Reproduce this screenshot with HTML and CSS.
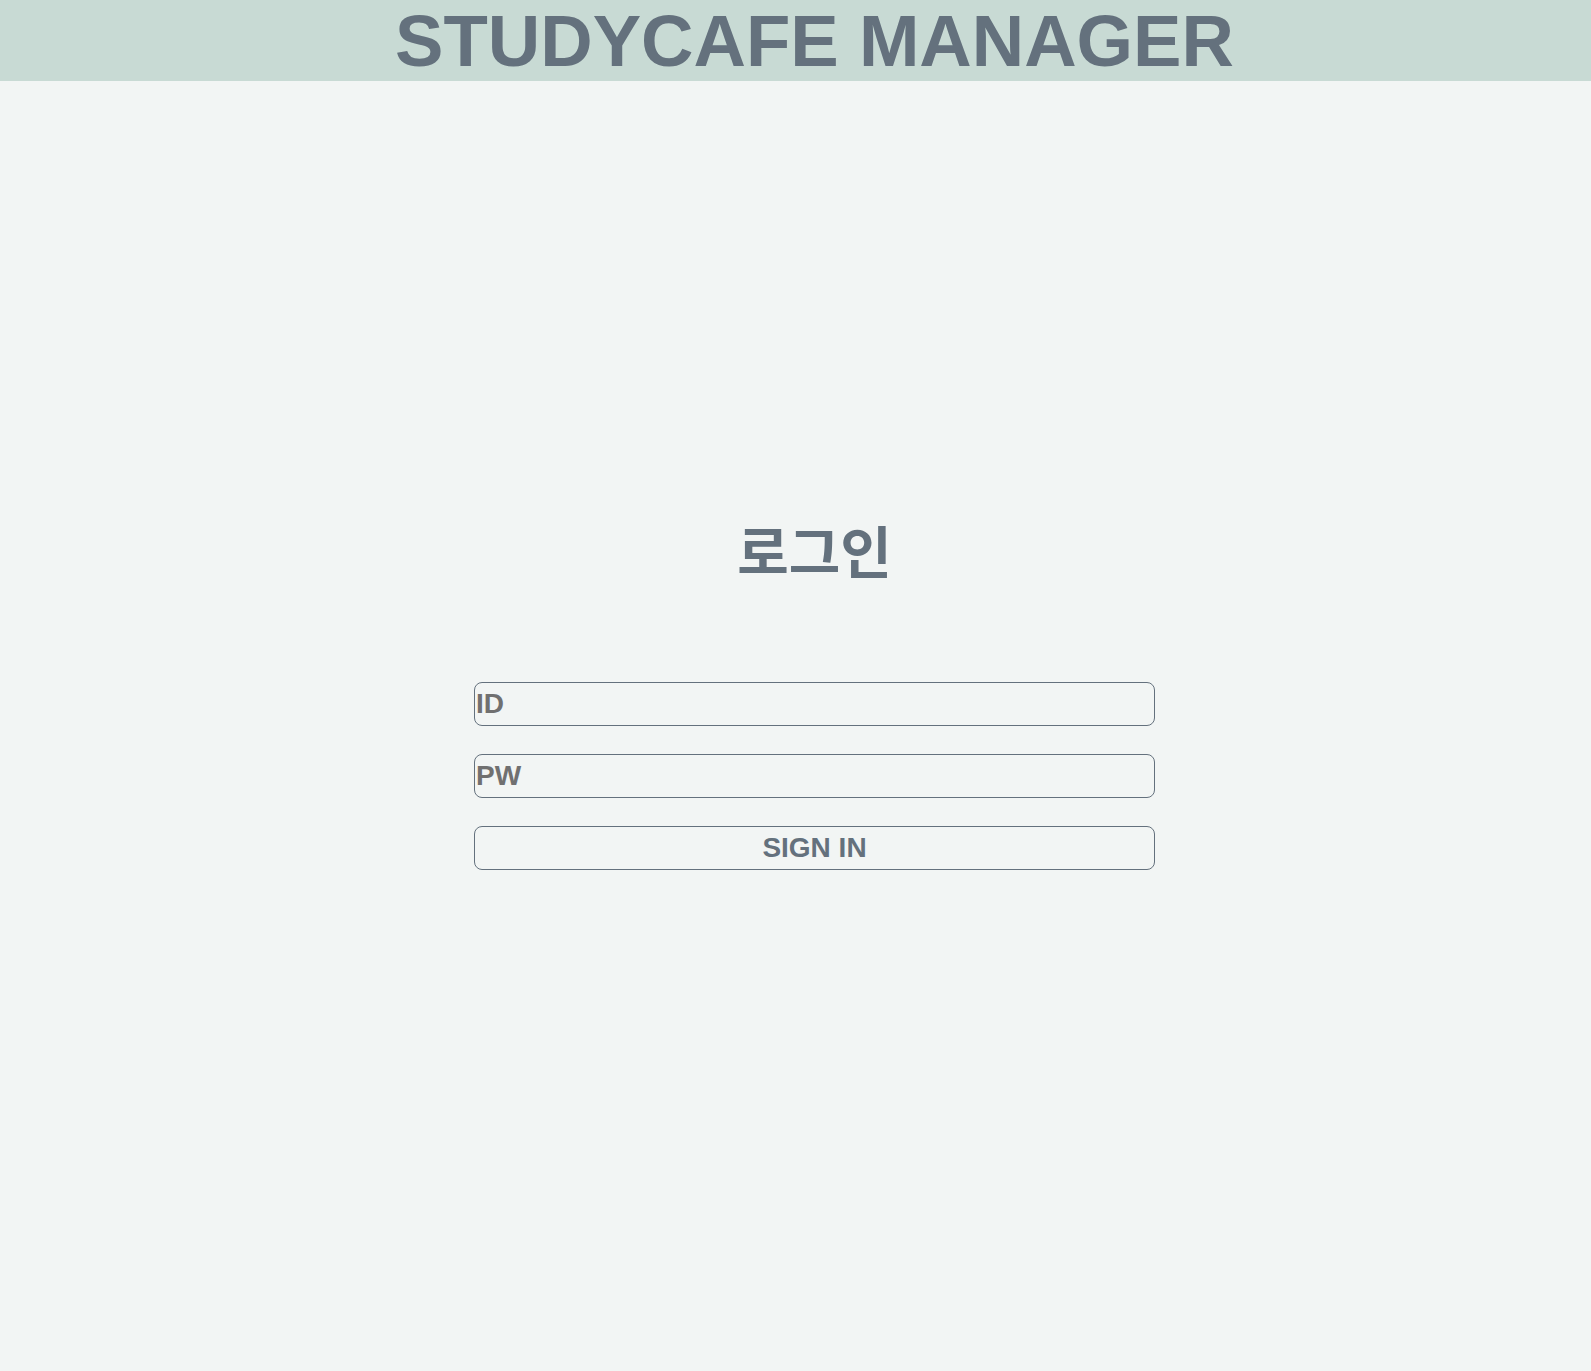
FILE: index.html
```html
<!DOCTYPE html>
<html lang="ko">
<head>
    <meta charset="UTF-8">
    <meta name="viewport" content="width=device-width, initial-scale=1.0">
    <title>StudyCafe Manager - 로그인</title>
    <link rel="stylesheet" href="styles.css">
</head>
<body>

    <!-- Header -->
    <div class="header">
        <h1 class="header-title">STUDYCAFE MANAGER</h1>
    </div>

    <!-- Login -->
    <div class="main">
        <h2 class="login-title">로그인</h2>
        <form class="login-form" onsubmit="return false;">
            <input class="login-input" type="text" placeholder="ID">
            <input class="login-input" type="password" placeholder="PW">
            <button class="login-button" type="submit">SIGN IN</button>
        </form>
    </div>

</body>
</html>
```

FILE: styles.css
```css
/* Global Reset */
* {
    margin: 0;
    padding: 0;
    box-sizing: border-box;
}

body {
    background: #f2f5f4;
    color: #64717d;
    font-family: "Liberation Sans", "Noto Sans CJK KR", sans-serif;
    min-height: 100vh;
}

/* Header */
.header {
    background: #c8dad4;
    height: 81px;
    padding-left: 38px;
    text-align: center;
}

.header-title {
    font-size: 72.6px;
    font-weight: bold;
    line-height: 81px;
    color: #64717d;
}

/* Login Area */
.main {
    display: flex;
    flex-direction: column;
    align-items: center;
    padding: 433px 0 0 38px;
}

.login-title {
    font-family: "Noto Sans CJK KR", sans-serif;
    font-size: 56px;
    font-weight: bold;
    line-height: 70px;
}

.login-form {
    display: flex;
    flex-direction: column;
    gap: 28px;
    width: 681px;
    margin-top: 98px;
}

.login-input,
.login-button {
    height: 44px;
    border: 1px solid #64717d;
    border-radius: 8px;
    background: #f2f5f4;
    font-family: "Liberation Sans", sans-serif;
    font-size: 28px;
    font-weight: bold;
    outline: none;
}

.login-input {
    padding: 1px 1px;
    color: #64717d;
}

.login-input::placeholder {
    color: #707070;
    opacity: 1;
}

.login-button {
    color: #64717d;
    cursor: pointer;
}
```
